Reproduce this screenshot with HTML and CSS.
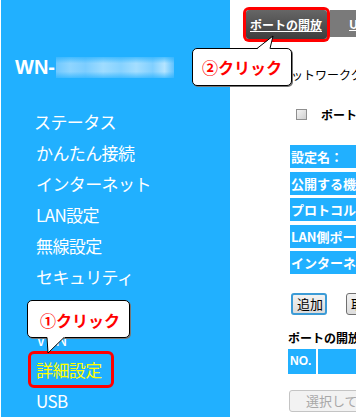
FILE: index.html
```html
<!DOCTYPE html>
<html lang="ja">
<head>
  <meta charset="UTF-8">
  <meta name="viewport" content="width=device-width, initial-scale=1.0">
  <title>ポートの開放</title>
  <link rel="stylesheet" href="styles.css">
</head>
<body>
  <div class="page">
    <aside class="sidebar">
      <div class="brand">
        <span class="brand-name">WN-</span>
        <span class="brand-blur"></span>
      </div>
      <ul class="menu">
        <li class="first">ステータス</li>
        <li>かんたん接続</li>
        <li>インターネット</li>
        <li>LAN設定</li>
        <li>無線設定</li>
        <li>セキュリティ</li>
        <li>アプリ</li>
        <li>VPN</li>
        <li class="active">詳細設定</li>
        <li>USB</li>
      </ul>
    </aside>

    <main class="content">
      <div class="tabs">
        <a class="tab current">ポートの開放</a>
        <a class="tab">UPnP</a>
      </div>
      <div class="panel">
        <p class="intro">このネットワーククライアントへの公開</p>
        <label class="check-row"><span class="check"></span>ポートの開放を有効にする</label>
        <div class="fields">
          <div class="field">設定名：</div>
          <div class="field">公開する機器</div>
          <div class="field">プロトコル：</div>
          <div class="field">LAN側ポート</div>
          <div class="field">インターネット側ポート</div>
        </div>
        <div class="buttons">
          <button class="btn focus">追加</button>
          <button class="btn">取消</button>
        </div>
        <h3 class="list-title">ポートの開放リスト</h3>
        <div class="list-head">
          <div class="cell-no">NO.</div>
          <div class="cell-rest"></div>
        </div>
        <button class="btn disabled">選択して削除</button>
      </div>
    </main>

    <div class="callout callout-1">①クリック</div>
    <svg class="tail tail-1" width="24" height="18" viewBox="0 0 24 18">
      <polygon points="3,0 4,16 21,0" fill="#fff"/>
      <polyline points="3,0.5 4,16 20,0.5" fill="none" stroke="#000" stroke-width="1"/>
    </svg>

    <div class="callout callout-2">②クリック</div>
    <svg class="tail tail-2" width="22" height="16" viewBox="0 0 22 16">
      <polygon points="2,15 18,2 15,15" fill="#fff"/>
      <polyline points="2,14.5 18,2 15,14.5" fill="none" stroke="#000" stroke-width="1"/>
    </svg>
  </div>
</body>
</html>
```

FILE: styles.css
```css
body {
  margin: 0;
  background-color: #ffffff;
  font-family: "Noto Sans CJK JP", "Noto Sans", sans-serif;
}
.page {
  position: relative;
  display: flex;
  width: 356px;
  height: 417px;
  overflow: hidden;
}
.sidebar {
  width: 229px;
  margin-left: 1px;
  flex-shrink: 0;
  background-color: #21b0ff;
  color: #ffffff;
  padding-top: 56px;
  box-sizing: border-box;
}
.brand {
  display: flex;
  align-items: center;
  height: 22px;
  padding-left: 14px;
}
.brand-name {
  font-family: "Liberation Sans", Arial, sans-serif;
  font-weight: bold;
  font-size: 20px;
  line-height: 22px;
}
.brand-blur {
  width: 118px;
  height: 21px;
  margin-left: 1px;
  background:
    linear-gradient(180deg, rgba(33, 176, 255, 0.7) 0, rgba(33, 176, 255, 0) 30%, rgba(33, 176, 255, 0) 70%, rgba(33, 176, 255, 0.7) 100%),
    linear-gradient(90deg, #6fc8ff 0, #8fd5ff 12%, #7ccdff 25%, #9fdcff 40%, #86d2ff 55%, #a4deff 68%, #80cfff 82%, #b4e4ff 92%, #5fc2ff 100%);
}
.menu {
  list-style: none;
  margin: 28px 0 0 0;
  padding: 0 0 0 35px;
}
.menu li {
  position: relative;
  font-size: 17px;
  line-height: 31px;
  height: 31px;
  letter-spacing: -0.6px;
}
.menu li.first {
  margin-left: -2px;
}
.menu li.active {
  color: #ffff00;
}
.menu li.active::after {
  content: "";
  position: absolute;
  left: -8px;
  top: -3px;
  width: 80px;
  height: 31px;
  border: 3px solid #ff0000;
  border-radius: 6px;
}
.content {
  flex: 1;
  padding-left: 16px;
}
.tabs {
  display: flex;
  gap: 3px;
  margin-top: 10px;
  height: 29px;
}
.tab {
  display: flex;
  align-items: center;
  padding: 0 5px 0 4px;
  font-size: 12px;
  font-weight: bold;
  color: #ffffff;
  text-decoration: underline;
  background: linear-gradient(#666666, #3d3d3d);
  white-space: nowrap;
}
.tab.current {
  width: 81px;
  box-sizing: border-box;
  border-radius: 3px;
  box-shadow: 0 0 0 3px #ff0000;
}
.tab:not(.current) {
  height: 27px;
  padding-left: 19px;
  background: #7a7a7a;
}
.panel {
  padding-left: 42px;
}
.intro {
  margin: 28px 0 0 -33px;
  font-size: 12px;
  line-height: 16px;
  white-space: nowrap;
  color: #000000;
}
.check-row {
  display: flex;
  align-items: center;
  height: 16px;
  margin-top: 23px;
  padding-left: 8px;
  font-size: 12px;
  font-weight: bold;
  white-space: nowrap;
}
.check {
  width: 9px;
  height: 9px;
  margin-right: 14px;
  border: 1px solid #8f8f8f;
  background: linear-gradient(135deg, #f4f4f4, #cfcfcf);
}
.fields {
  display: flex;
  flex-direction: column;
  gap: 3.5px;
  margin-top: 23px;
  margin-left: 2px;
}
.field {
  height: 23px;
  line-height: 23px;
  padding-left: 1px;
  background-color: #21b0ff;
  color: #ffffff;
  font-size: 13px;
  font-weight: bold;
  white-space: nowrap;
  overflow: hidden;
}
.buttons {
  display: flex;
  gap: 19px;
  margin-top: 19px;
  margin-left: 3px;
}
.btn {
  height: 22px;
  padding: 0 4px;
  font-family: "Noto Sans CJK JP", sans-serif;
  font-size: 13px;
  line-height: 18px;
  color: #000000;
  border: 1px solid #707070;
  border-radius: 3px;
  background: linear-gradient(#f2f2f2, #dcdcdc);
  white-space: nowrap;
  flex-shrink: 0;
}
.btn.focus {
  width: 36px;
  border: 2px solid #3c9bd6;
}
.list-title {
  margin: 16px 0 0 0;
  font-size: 12px;
  line-height: 14px;
  white-space: nowrap;
}
.list-head {
  display: flex;
  gap: 2px;
  height: 25px;
  margin-top: 4px;
}
.cell-no {
  width: 28px;
  background-color: #21b0ff;
  color: #ffffff;
  font-family: "Liberation Sans", Arial, sans-serif;
  font-weight: bold;
  font-size: 12px;
  line-height: 25px;
  padding-left: 2px;
  box-sizing: border-box;
}
.cell-rest {
  flex: 1;
  background-color: #21b0ff;
}
.btn.disabled {
  display: block;
  margin-top: 16px;
  margin-left: 1px;
  padding-left: 16px;
  color: #a8a8a8;
  border-color: #c4c4c4;
  background: #f2f2f2;
}
.callout {
  position: absolute;
  box-sizing: border-box;
  background-color: #ffffff;
  border: 1px solid #000000;
  border-radius: 5px;
  box-shadow: 1px 1px 0 #777777;
  color: #ff0000;
  font-weight: bold;
  font-size: 16px;
  line-height: 20px;
  text-align: center;
  white-space: nowrap;
}
.callout-1 {
  left: 27px;
  top: 300px;
  width: 103px;
  height: 38px;
  padding-top: 9px;
  padding-left: 3px;
}
.callout-2 {
  left: 192px;
  top: 48px;
  width: 100px;
  height: 38px;
  padding-top: 8px;
}
.tail {
  position: absolute;
}
.tail-1 {
  left: 44px;
  top: 337px;
}
.tail-2 {
  left: 255px;
  top: 34px;
}
```
